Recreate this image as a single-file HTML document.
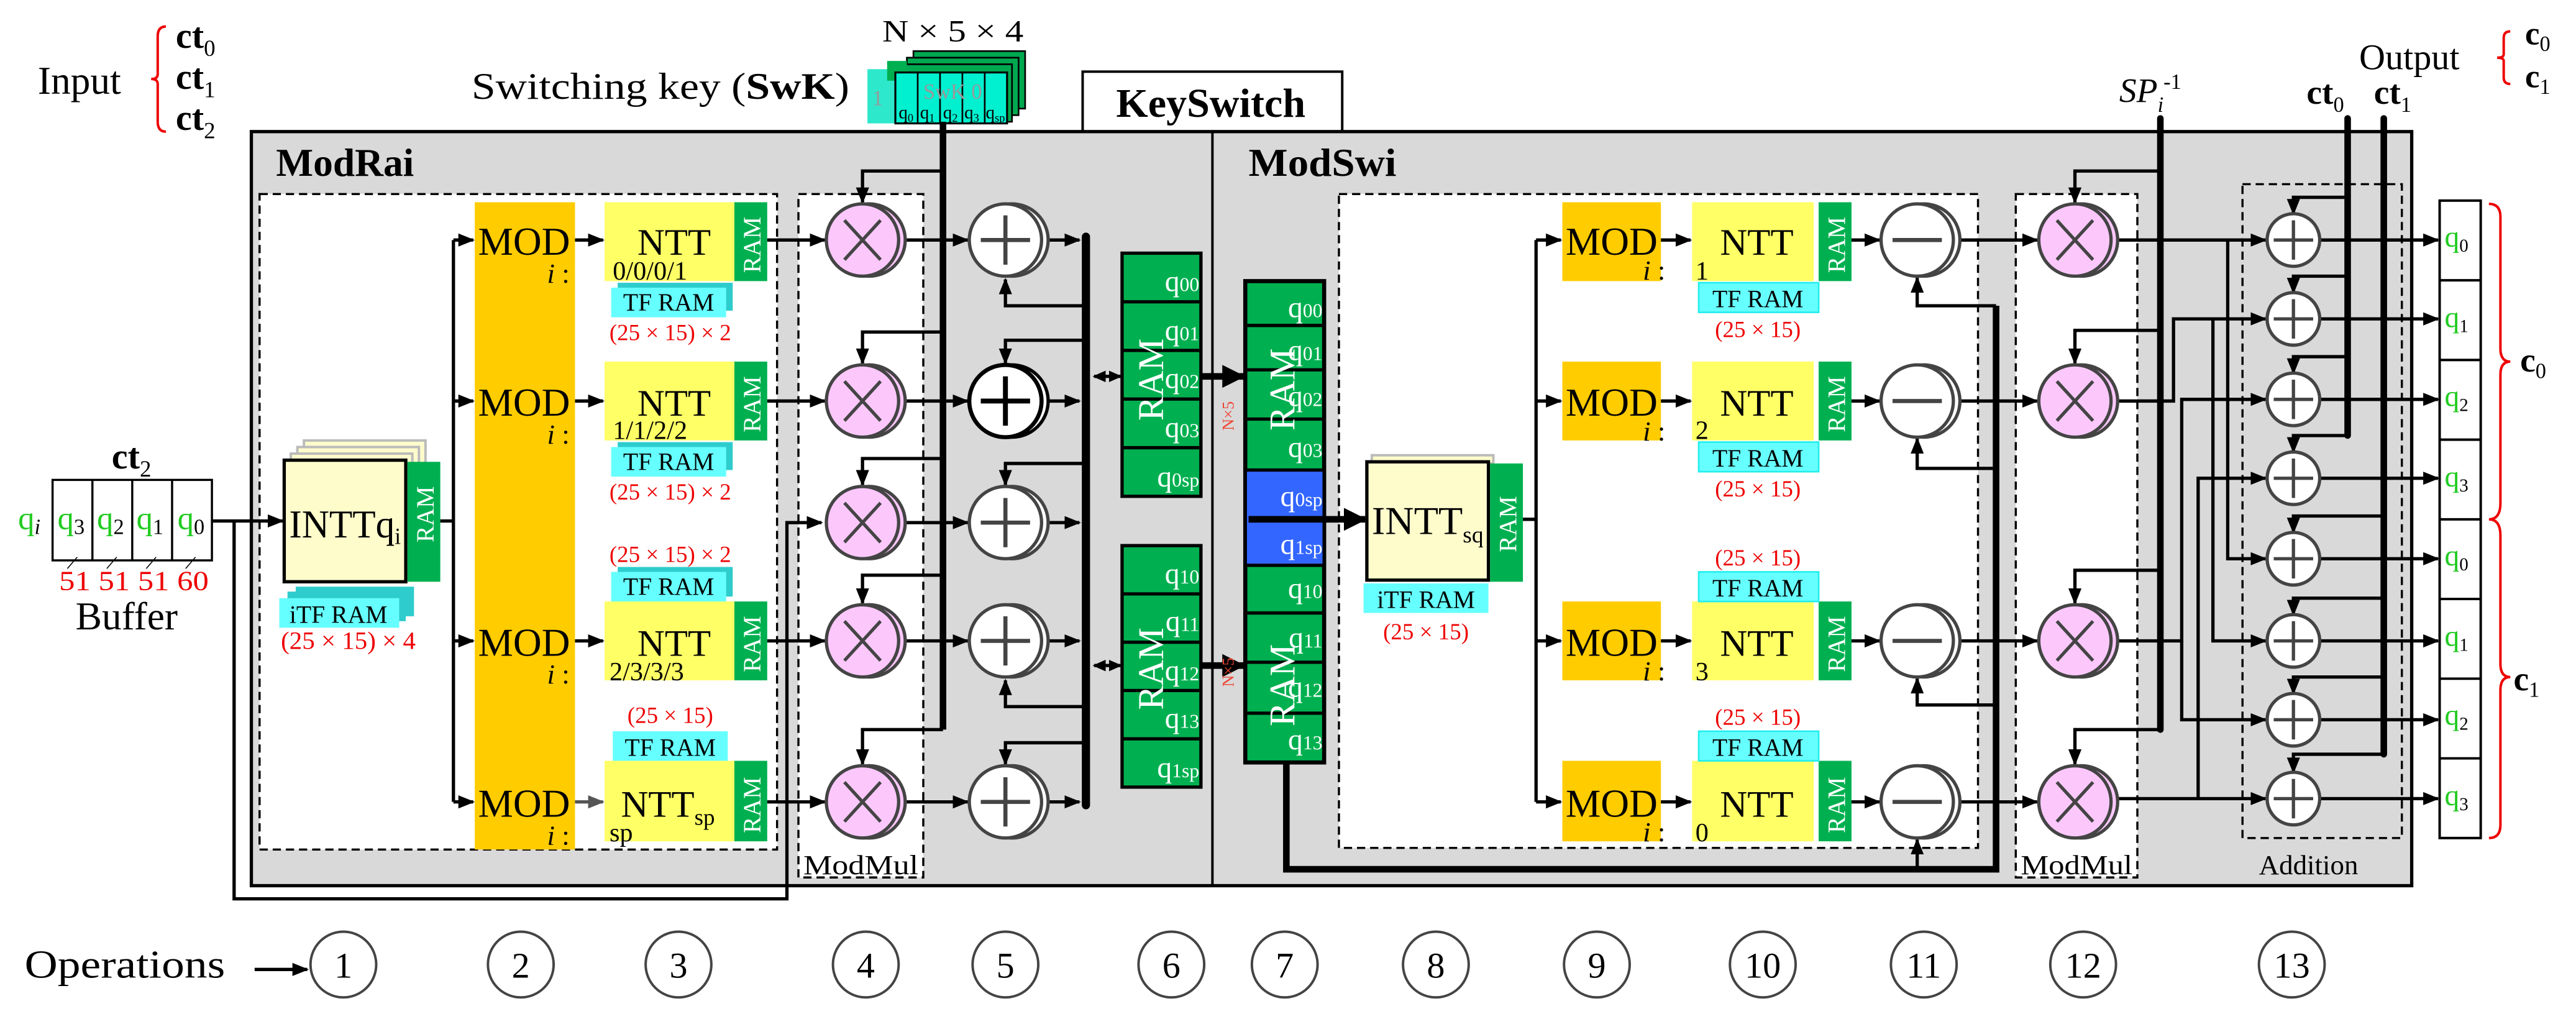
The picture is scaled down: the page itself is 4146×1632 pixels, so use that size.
<!DOCTYPE html>
<html><head><meta charset="utf-8"><style>
html,body{margin:0;padding:0;background:#fff;}
svg{display:block;}
svg *{font-family:"Liberation Serif",serif;}
text,tspan{font-family:"Liberation Serif",serif;}
</style></head><body>
<svg width="4146" height="1632" viewBox="0 0 1568 617" xmlns="http://www.w3.org/2000/svg" font-family="'Liberation Serif', serif">
<defs>
<marker id="a" markerWidth="10" markerHeight="10" refX="9" refY="5" orient="auto" markerUnits="userSpaceOnUse"><path d="M0,1 L10,5 L0,9 z" fill="#000"/></marker>
<marker id="ab" markerWidth="14" markerHeight="14" refX="13" refY="7" orient="auto" markerUnits="userSpaceOnUse"><path d="M0,0 L14,7 L0,14 z" fill="#000"/></marker>
<marker id="ag" markerWidth="10" markerHeight="10" refX="9" refY="5" orient="auto" markerUnits="userSpaceOnUse"><path d="M0,1 L10,5 L0,9 z" fill="#555"/></marker>
<marker id="as" markerWidth="8" markerHeight="8" refX="7" refY="4" orient="auto" markerUnits="userSpaceOnUse"><path d="M0,0.5 L8,4 L0,7.5 z" fill="#000"/></marker>
<marker id="asr" markerWidth="8" markerHeight="8" refX="1" refY="4" orient="auto" markerUnits="userSpaceOnUse"><path d="M8,0.5 L0,4 L8,7.5 z" fill="#000"/></marker>
<g id="mul"><circle cx="4" cy="0" r="22" fill="#fcc8fc" stroke="#444" stroke-width="2"/><circle cx="0" cy="0" r="22" fill="#fcc8fc" stroke="#444" stroke-width="2"/><path d="M-11,-12 L11,12 M11,-12 L-11,12" stroke="#444" stroke-width="2"/></g>
<g id="pls"><circle cx="4" cy="0" r="22" fill="#fff" stroke="#444" stroke-width="2"/><circle cx="0" cy="0" r="22" fill="#fff" stroke="#444" stroke-width="2"/><path d="M-15,0 L15,0 M0,-15 L0,15" stroke="#444" stroke-width="2.5"/></g>
<g id="mns"><circle cx="4" cy="0" r="22" fill="#fff" stroke="#444" stroke-width="2"/><circle cx="0" cy="0" r="22" fill="#fff" stroke="#444" stroke-width="2"/><path d="M-15,0 L15,0" stroke="#444" stroke-width="2.5"/></g>
<g id="sp"><circle cx="0" cy="0" r="16" fill="#fff" stroke="#444" stroke-width="2"/><path d="M-12,0 L12,0 M0,-12 L0,12" stroke="#444" stroke-width="2"/></g>
</defs>

<!-- header -->
<text x="23" y="57" font-size="24">Input</text>
<path d="M101,16 Q96,16 96,22 L96,45 Q96,48 92,48 Q96,48 96,51 L96,74 Q96,80 101,80" fill="none" stroke="#e00" stroke-width="1.5"/>
<text x="107" y="29" font-size="22" font-weight="bold">ct<tspan font-size="14" font-weight="normal" dy="5">0</tspan></text>
<text x="107" y="54" font-size="22" font-weight="bold">ct<tspan font-size="14" font-weight="normal" dy="5">1</tspan></text>
<text x="107" y="79" font-size="22" font-weight="bold">ct<tspan font-size="14" font-weight="normal" dy="5">2</tspan></text>
<text x="287" y="60" font-size="23" textLength="230" lengthAdjust="spacingAndGlyphs">Switching key (<tspan font-weight="bold">SwK</tspan>)</text>
<text x="537" y="25" font-size="19" textLength="86" lengthAdjust="spacingAndGlyphs">N × 5 × 4</text>
<!-- key stack -->
<rect x="528" y="42" width="24" height="33" fill="#2ee8cc"/>
<rect x="556" y="31" width="68" height="35" fill="#00a850" stroke="#000" stroke-width="1"/>
<rect x="552" y="35" width="68" height="35" fill="#00a850" stroke="#000" stroke-width="1"/>
<rect x="548" y="39" width="68" height="35" fill="#00a850" stroke="#000" stroke-width="1"/>
<rect x="540" y="37" width="12" height="12" fill="#00b050"/>
<rect x="545" y="44" width="68" height="31" fill="#00f0d0" stroke="#000" stroke-width="1.2"/>
<path d="M558.6,44 V75 M572.2,44 V75 M585.8,44 V75 M599.4,44 V75" stroke="#000" stroke-width="1"/>
<text x="531" y="64" font-size="13" fill="#999">1</text>
<text x="562" y="60" font-size="13" fill="#999">SwK 0</text>
<g font-size="11"><text x="547" y="72">q<tspan font-size="7" dy="2">0</tspan></text><text x="560" y="72">q<tspan font-size="7" dy="2">1</tspan></text><text x="574" y="72">q<tspan font-size="7" dy="2">2</tspan></text><text x="587" y="72">q<tspan font-size="7" dy="2">3</tspan></text><text x="600" y="72">q<tspan font-size="7" dy="2">sp</tspan></text></g>
<rect x="659" y="43.5" width="158" height="37" fill="#fff" stroke="#000" stroke-width="1.5"/>
<text x="737" y="71" font-size="25" font-weight="bold" text-anchor="middle">KeySwitch</text>
<text x="1290" y="62" font-size="21" font-style="italic">SP<tspan font-size="13" dy="6">i</tspan><tspan font-size="13" font-style="normal" dy="-14">-1</tspan></text>
<text x="1404" y="63" font-size="21" font-weight="bold">ct<tspan font-size="13" font-weight="normal" dy="5">0</tspan></text>
<text x="1445" y="63" font-size="21" font-weight="bold">ct<tspan font-size="13" font-weight="normal" dy="5">1</tspan></text>
<text x="1436" y="42" font-size="22">Output</text>
<path d="M1528,19 Q1524,19 1524,23 L1524,33 Q1524,35 1520,35 Q1524,35 1524,37 L1524,47 Q1524,51 1528,51" fill="none" stroke="#e00" stroke-width="1.5"/>
<text x="1537" y="27" font-size="20" font-weight="bold">c<tspan font-size="13" font-weight="normal" dy="4">0</tspan></text>
<text x="1537" y="53" font-size="20" font-weight="bold">c<tspan font-size="13" font-weight="normal" dy="4">1</tspan></text>

<!-- main gray box -->
<rect x="153" y="80" width="1315" height="459" fill="#d9d9d9" stroke="#000" stroke-width="2"/>
<line x1="738" y1="80" x2="738" y2="539" stroke="#000" stroke-width="1.5"/>
<text x="168" y="107" font-size="24" font-weight="bold" textLength="84" lengthAdjust="spacingAndGlyphs">ModRai</text>
<text x="760" y="107" font-size="24" font-weight="bold" textLength="90" lengthAdjust="spacingAndGlyphs">ModSwi</text>

<!-- dashed boxes -->
<rect x="158" y="118" width="315" height="399" fill="#fff" stroke="#000" stroke-width="1.3" stroke-dasharray="5,3"/>
<rect x="486" y="118" width="76" height="416" fill="#fff" stroke="#000" stroke-width="1.3" stroke-dasharray="5,3"/>
<text x="489" y="532" font-size="17" textLength="70" lengthAdjust="spacingAndGlyphs">ModMul</text>
<rect x="815" y="118" width="389" height="398" fill="#fff" stroke="#000" stroke-width="1.3" stroke-dasharray="5,3"/>
<rect x="1227" y="118" width="74" height="416" fill="#fff" stroke="#000" stroke-width="1.3" stroke-dasharray="5,3"/>
<text x="1230" y="532" font-size="17" textLength="68" lengthAdjust="spacingAndGlyphs">ModMul</text>
<rect x="1365" y="112" width="97" height="398" fill="none" stroke="#000" stroke-width="1.3" stroke-dasharray="5,3"/>
<text x="1375" y="532" font-size="17">Addition</text>

<!-- buffer -->
<text x="68" y="285" font-size="22" font-weight="bold">ct<tspan font-size="14" font-weight="normal" dy="5">2</tspan></text>
<rect x="32" y="292" width="97" height="49" fill="#fff" stroke="#000" stroke-width="1.3"/>
<path d="M56.25,292 V341 M80.5,292 V341 M104.75,292 V341" stroke="#000" stroke-width="1.3"/>
<text x="11" y="322" font-size="20" fill="#2c2">q<tspan font-size="13" font-style="italic" fill="#000" dy="3">i</tspan></text>
<g font-size="20" fill="#2c2"><text x="35" y="322">q<tspan font-size="13" fill="#000" dy="3">3</tspan></text><text x="59" y="322">q<tspan font-size="13" fill="#000" dy="3">2</tspan></text><text x="83" y="322">q<tspan font-size="13" fill="#000" dy="3">1</tspan></text><text x="108" y="322">q<tspan font-size="13" fill="#000" dy="3">0</tspan></text></g>
<g stroke="#000" stroke-width="0.6"><path d="M41,346 L47,339 M65,346 L71,339 M89,346 L95,339 M113,346 L119,339"/></g>
<text x="36" y="359" font-size="17" fill="#e00" textLength="91" lengthAdjust="spacingAndGlyphs">51 51 51 60</text>
<text x="46" y="383" font-size="24">Buffer</text>

<!-- ModRai INTT -->
<rect x="185" y="268" width="74" height="73" fill="#fffccc" stroke="#bbb" stroke-width="1.5"/>
<rect x="181" y="272" width="74" height="73" fill="#fffccc" stroke="#bbb" stroke-width="1.5"/>
<rect x="177" y="276" width="74" height="73" fill="#fffccc" stroke="#bbb" stroke-width="1.5"/>
<rect x="173" y="280" width="74" height="74" fill="#fffccc" stroke="#000" stroke-width="2"/>
<rect x="248" y="281" width="20" height="73" fill="#00b050"/>
<text x="176" y="327" font-size="24" textLength="68" lengthAdjust="spacingAndGlyphs">INTTq<tspan font-size="14" dy="4">i</tspan></text>
<text transform="translate(264,330) rotate(-90)" font-size="15" fill="#fff">RAM</text>
<rect x="180" y="357" width="72" height="18" fill="#2ecccc"/>
<rect x="175" y="360" width="72" height="18" fill="#2ecccc"/>
<rect x="170" y="364" width="73" height="18" fill="#66ffff"/>
<text x="206" y="379" font-size="15" text-anchor="middle">iTF RAM</text>
<text x="171" y="395" font-size="15" fill="#e00" textLength="82" lengthAdjust="spacingAndGlyphs">(25 × 15) × 4</text>

<!-- MOD column -->
<rect x="289" y="123" width="61" height="394" fill="#ffcc00"/>
<g font-size="24"><text x="291" y="155">MOD</text><text x="291" y="253">MOD</text><text x="291" y="399">MOD</text><text x="291" y="497">MOD</text></g>
<g font-size="17"><text x="333" y="172"><tspan font-style="italic">i</tspan> :</text><text x="333" y="270"><tspan font-style="italic">i</tspan> :</text><text x="333" y="416"><tspan font-style="italic">i</tspan> :</text><text x="333" y="514"><tspan font-style="italic">i</tspan> :</text></g>

<!-- NTT ModRai -->
<g fill="#ffff66"><rect x="368" y="123" width="79" height="48"/><rect x="368" y="220" width="79" height="48"/><rect x="368" y="366" width="79" height="48"/><rect x="368" y="463" width="79" height="49"/></g>
<g fill="#00b050"><rect x="447" y="123" width="20" height="48"/><rect x="447" y="220" width="20" height="48"/><rect x="447" y="366" width="20" height="48"/><rect x="447" y="463" width="20" height="49"/></g>
<g font-size="15" fill="#fff"><text transform="translate(463,166) rotate(-90)">RAM</text><text transform="translate(463,263) rotate(-90)">RAM</text><text transform="translate(463,409) rotate(-90)">RAM</text><text transform="translate(463,507) rotate(-90)">RAM</text></g>
<g font-size="23"><text x="388" y="155">NTT</text><text x="388" y="253">NTT</text><text x="388" y="399">NTT</text><text x="378" y="497">NTT<tspan font-size="14" dy="5">sp</tspan></text></g>
<g font-size="16"><text x="373" y="170">0/0/0/1</text><text x="373" y="267">1/1/2/2</text><text x="371" y="414">2/3/3/3</text><text x="371" y="512">sp</text></g>
<rect x="376" y="172" width="70" height="17" fill="#2ecccc"/><rect x="372" y="175" width="70" height="18" fill="#66ffff"/>
<rect x="376" y="269" width="70" height="17" fill="#2ecccc"/><rect x="372" y="272" width="70" height="18" fill="#66ffff"/>
<rect x="376" y="345" width="70" height="18" fill="#2ecccc"/><rect x="372" y="348" width="70" height="18" fill="#66ffff"/>
<rect x="373" y="445" width="70" height="18" fill="#66ffff"/>
<g font-size="15" text-anchor="middle"><text x="407" y="189">TF RAM</text><text x="407" y="286">TF RAM</text><text x="407" y="362">TF RAM</text><text x="408" y="460">TF RAM</text></g>
<g font-size="14" fill="#e00" text-anchor="middle"><text x="408" y="207">(25 × 15) × 2</text><text x="408" y="304">(25 × 15) × 2</text><text x="408" y="342">(25 × 15) × 2</text><text x="408" y="440">(25 × 15)</text></g>

<!-- ModRai wiring -->
<g stroke="#000" stroke-width="2" fill="none">
<line x1="129" y1="317" x2="172" y2="317" marker-end="url(#a)"/>
<polyline points="142.5,317 142.5,547 479,547 479,318 500,318" marker-end="url(#a)"/>
<line x1="268" y1="317" x2="276" y2="317"/>
<line x1="276" y1="146" x2="276" y2="488"/>
<line x1="276" y1="146" x2="288" y2="146" marker-end="url(#a)"/>
<line x1="276" y1="244" x2="288" y2="244" marker-end="url(#a)"/>
<line x1="276" y1="390" x2="288" y2="390" marker-end="url(#a)"/>
<line x1="276" y1="488" x2="288" y2="488" marker-end="url(#a)"/>
<line x1="350" y1="146" x2="367" y2="146" marker-end="url(#a)"/>
<line x1="350" y1="244" x2="367" y2="244" marker-end="url(#a)"/>
<line x1="350" y1="390" x2="367" y2="390" marker-end="url(#a)"/>
<line x1="350" y1="488" x2="367" y2="488" stroke="#555" marker-end="url(#ag)"/>
<line x1="467" y1="146" x2="502" y2="146" marker-end="url(#a)"/>
<line x1="467" y1="244" x2="502" y2="244" marker-end="url(#a)"/>
<line x1="467" y1="390" x2="502" y2="390" marker-end="url(#a)"/>
<line x1="467" y1="488" x2="502" y2="488" marker-end="url(#a)"/>
<line x1="551" y1="146" x2="589" y2="146" marker-end="url(#a)"/>
<line x1="551" y1="244" x2="589" y2="244" marker-end="url(#a)"/>
<line x1="551" y1="318" x2="589" y2="318" marker-end="url(#a)"/>
<line x1="551" y1="390" x2="589" y2="390" marker-end="url(#a)"/>
<line x1="551" y1="488" x2="589" y2="488" marker-end="url(#a)"/>
<line x1="638" y1="146" x2="657" y2="146" marker-end="url(#a)"/>
<line x1="638" y1="244" x2="657" y2="244" marker-end="url(#a)"/>
<line x1="638" y1="318" x2="657" y2="318" marker-end="url(#a)"/>
<line x1="638" y1="390" x2="657" y2="390" marker-end="url(#a)"/>
<line x1="638" y1="488" x2="657" y2="488" marker-end="url(#a)"/>
<polyline points="661,186 612,186 612,170" marker-end="url(#a)"/>
<polyline points="661,207 612,207 612,221" marker-end="url(#a)"/>
<polyline points="661,282 612,282 612,295" marker-end="url(#a)"/>
<polyline points="661,430 612,430 612,414" marker-end="url(#a)"/>
<polyline points="661,452 612,452 612,465" marker-end="url(#a)"/>
<polyline points="574,104 525,104 525,123" marker-end="url(#a)"/>
<polyline points="574,202 525,202 525,221" marker-end="url(#a)"/>
<polyline points="574,279 525,279 525,295" marker-end="url(#a)"/>
<polyline points="574,350 525,350 525,367" marker-end="url(#a)"/>
<polyline points="574,444 525,444 525,465" marker-end="url(#a)"/>
<line x1="666" y1="229" x2="682" y2="229" marker-start="url(#asr)" marker-end="url(#as)"/>
<line x1="666" y1="405" x2="682" y2="405" marker-start="url(#asr)" marker-end="url(#as)"/>
</g>
<line x1="574" y1="74" x2="574" y2="444" stroke="#000" stroke-width="4"/>
<line x1="661" y1="144" x2="661" y2="490" stroke="#000" stroke-width="5" stroke-linecap="round"/>
<use href="#mul" x="525" y="146"/><use href="#mul" x="525" y="244"/><use href="#mul" x="525" y="318"/><use href="#mul" x="525" y="390"/><use href="#mul" x="525" y="488"/>
<use href="#pls" x="612" y="146"/><use href="#pls" x="612" y="318"/><use href="#pls" x="612" y="390"/><use href="#pls" x="612" y="488"/>
<g><circle cx="616" cy="244" r="22" fill="#fff" stroke="#000" stroke-width="2"/><circle cx="612" cy="244" r="22" fill="#fff" stroke="#000" stroke-width="2.5"/><path d="M597,244 L627,244 M612,229 L612,259" stroke="#000" stroke-width="3"/></g>

<!-- col6 -->
<g stroke="#000" stroke-width="2" fill="#00b050">
<rect x="683" y="154" width="48" height="148"/><rect x="683" y="332" width="48" height="147"/>
</g>
<path d="M683,183.6 H731 M683,213.2 H731 M683,242.8 H731 M683,272.4 H731 M683,361.4 H731 M683,390.8 H731 M683,420.2 H731 M683,449.6 H731" stroke="#000" stroke-width="2"/>
<g font-size="18" fill="#fff" text-anchor="end">
<text x="730" y="177">q<tspan font-size="12">00</tspan></text><text x="730" y="207">q<tspan font-size="12">01</tspan></text><text x="730" y="236">q<tspan font-size="12">02</tspan></text><text x="730" y="266">q<tspan font-size="12">03</tspan></text><text x="730" y="296">q<tspan font-size="12">0sp</tspan></text>
<text x="730" y="355">q<tspan font-size="12">10</tspan></text><text x="730" y="384">q<tspan font-size="12">11</tspan></text><text x="730" y="414">q<tspan font-size="12">12</tspan></text><text x="730" y="443">q<tspan font-size="12">13</tspan></text><text x="730" y="473">q<tspan font-size="12">1sp</tspan></text>
</g>
<g font-size="22" fill="#fff"><text transform="translate(708,256) rotate(-90)">RAM</text><text transform="translate(708,432) rotate(-90)">RAM</text></g>
<g stroke="#000" stroke-width="4"><line x1="731" y1="229" x2="757" y2="229" marker-end="url(#ab)"/><line x1="731" y1="405" x2="757" y2="405" marker-end="url(#ab)"/></g>
<g font-size="10" fill="#e43"><text transform="translate(751,262) rotate(-90)">N×5</text><text transform="translate(751,418) rotate(-90)">N×5</text></g>

<!-- col7 -->
<rect x="758" y="171" width="48" height="293" fill="#00b050" stroke="#000" stroke-width="2.5"/>
<rect x="759" y="286" width="46" height="58" fill="#3366ff"/>
<path d="M758,198 H806 M758,225 H806 M758,255 H806 M758,286 H806 M758,344 H806 M758,373 H806 M758,403 H806 M758,434 H806" stroke="#000" stroke-width="2"/>
<g font-size="18" fill="#fff" text-anchor="end">
<text x="805" y="193">q<tspan font-size="12">00</tspan></text><text x="805" y="219">q<tspan font-size="12">01</tspan></text><text x="805" y="247">q<tspan font-size="12">02</tspan></text><text x="805" y="278">q<tspan font-size="12">03</tspan></text><text x="805" y="308">q<tspan font-size="12">0sp</tspan></text><text x="805" y="337">q<tspan font-size="12">1sp</tspan></text><text x="805" y="364">q<tspan font-size="12">10</tspan></text><text x="805" y="394">q<tspan font-size="12">11</tspan></text><text x="805" y="424">q<tspan font-size="12">12</tspan></text><text x="805" y="456">q<tspan font-size="12">13</tspan></text>
</g>
<g font-size="22" fill="#fff"><text transform="translate(788,262) rotate(-90)">RAM</text><text transform="translate(788,442) rotate(-90)">RAM</text></g>
<line x1="760" y1="316" x2="831" y2="316" stroke="#000" stroke-width="4" marker-end="url(#ab)"/>
<polyline points="783,464 783,529 1215,529 1215,186" fill="none" stroke="#000" stroke-width="4"/>

<!-- INTTsq -->
<rect x="835" y="277" width="74" height="5" fill="#fffccc" stroke="#bbb" stroke-width="1.5"/>
<rect x="832" y="281" width="74" height="72" fill="#fffccc" stroke="#000" stroke-width="2"/>
<rect x="907" y="282" width="20" height="72" fill="#00b050"/>
<text x="835" y="325" font-size="24" textLength="68" lengthAdjust="spacingAndGlyphs">INTT<tspan font-size="14" dy="5">sq</tspan></text>
<text transform="translate(923,336) rotate(-90)" font-size="15" fill="#fff">RAM</text>
<rect x="830" y="355" width="76" height="18" fill="#66ffff"/>
<text x="868" y="370" font-size="15" text-anchor="middle">iTF RAM</text>
<text x="868" y="389" font-size="14" fill="#e00" text-anchor="middle">(25 × 15)</text>

<!-- ModSwi MOD/NTT -->
<g fill="#ffcc00"><rect x="951" y="123" width="60" height="48"/><rect x="951" y="220" width="60" height="48"/><rect x="951" y="366" width="60" height="48"/><rect x="951" y="463" width="60" height="49"/></g>
<g font-size="24"><text x="953" y="155">MOD</text><text x="953" y="253">MOD</text><text x="953" y="399">MOD</text><text x="953" y="497">MOD</text></g>
<g font-size="17"><text x="1000" y="170"><tspan font-style="italic">i</tspan> :</text><text x="1000" y="268"><tspan font-style="italic">i</tspan> :</text><text x="1000" y="414"><tspan font-style="italic">i</tspan> :</text><text x="1000" y="512"><tspan font-style="italic">i</tspan> :</text></g>
<g fill="#ffff66"><rect x="1030" y="123" width="74" height="48"/><rect x="1030" y="220" width="74" height="48"/><rect x="1030" y="366" width="74" height="48"/><rect x="1030" y="463" width="74" height="49"/></g>
<g fill="#00b050"><rect x="1107" y="123" width="20" height="48"/><rect x="1107" y="220" width="20" height="48"/><rect x="1107" y="366" width="20" height="48"/><rect x="1107" y="463" width="20" height="49"/></g>
<g font-size="15" fill="#fff"><text transform="translate(1123,166) rotate(-90)">RAM</text><text transform="translate(1123,263) rotate(-90)">RAM</text><text transform="translate(1123,409) rotate(-90)">RAM</text><text transform="translate(1123,507) rotate(-90)">RAM</text></g>
<g font-size="23"><text x="1047" y="155">NTT</text><text x="1047" y="253">NTT</text><text x="1047" y="399">NTT</text><text x="1047" y="497">NTT</text></g>
<g font-size="16"><text x="1032" y="170">1</text><text x="1032" y="267">2</text><text x="1032" y="414">3</text><text x="1032" y="512">0</text></g>
<g fill="#66ffff" stroke="#2ee" stroke-width="1"><rect x="1034" y="172" width="73" height="18"/><rect x="1034" y="269" width="73" height="18"/><rect x="1034" y="348" width="73" height="18"/><rect x="1034" y="445" width="73" height="18"/></g>
<g font-size="15" text-anchor="middle"><text x="1070" y="187">TF RAM</text><text x="1070" y="284">TF RAM</text><text x="1070" y="363">TF RAM</text><text x="1070" y="460">TF RAM</text></g>
<g font-size="14" fill="#e00" text-anchor="middle"><text x="1070" y="205">(25 × 15)</text><text x="1070" y="302">(25 × 15)</text><text x="1070" y="344">(25 × 15)</text><text x="1070" y="441">(25 × 15)</text></g>

<!-- ModSwi wiring -->
<g stroke="#000" stroke-width="2" fill="none">
<line x1="927" y1="316" x2="935" y2="316"/>
<line x1="935" y1="146" x2="935" y2="488"/>
<line x1="935" y1="146" x2="950" y2="146" marker-end="url(#a)"/>
<line x1="935" y1="244" x2="950" y2="244" marker-end="url(#a)"/>
<line x1="935" y1="390" x2="950" y2="390" marker-end="url(#a)"/>
<line x1="935" y1="488" x2="950" y2="488" marker-end="url(#a)"/>
<line x1="1011" y1="146" x2="1029" y2="146" marker-end="url(#a)"/>
<line x1="1011" y1="244" x2="1029" y2="244" marker-end="url(#a)"/>
<line x1="1011" y1="390" x2="1029" y2="390" marker-end="url(#a)"/>
<line x1="1011" y1="488" x2="1029" y2="488" marker-end="url(#a)"/>
<line x1="1127" y1="146" x2="1144" y2="146" marker-end="url(#a)"/>
<line x1="1127" y1="244" x2="1144" y2="244" marker-end="url(#a)"/>
<line x1="1127" y1="390" x2="1144" y2="390" marker-end="url(#a)"/>
<line x1="1127" y1="488" x2="1144" y2="488" marker-end="url(#a)"/>
<line x1="1193" y1="146" x2="1240" y2="146" marker-end="url(#a)"/>
<line x1="1193" y1="244" x2="1240" y2="244" marker-end="url(#a)"/>
<line x1="1193" y1="390" x2="1240" y2="390" marker-end="url(#a)"/>
<line x1="1193" y1="488" x2="1240" y2="488" marker-end="url(#a)"/>
<polyline points="1215,186 1167,186 1167,169" marker-end="url(#a)"/>
<polyline points="1215,285 1167,285 1167,267" marker-end="url(#a)"/>
<polyline points="1215,429 1167,429 1167,413" marker-end="url(#a)"/>
<line x1="1167" y1="529" x2="1167" y2="511" marker-end="url(#a)"/>
<polyline points="1315,104 1263,104 1263,123" marker-end="url(#a)"/>
<polyline points="1315,201 1263,201 1263,221" marker-end="url(#a)"/>
<polyline points="1315,347 1263,347 1263,367" marker-end="url(#a)"/>
<polyline points="1315,444 1263,444 1263,465" marker-end="url(#a)"/>
<line x1="1289" y1="146" x2="1379" y2="146" marker-end="url(#a)"/>
<polyline points="1356,146 1356,340 1379,340" marker-end="url(#a)"/>
<polyline points="1289,244 1323,244 1323,194 1379,194" marker-end="url(#a)"/>
<polyline points="1347,194 1347,390 1379,390" marker-end="url(#a)"/>
<polyline points="1289,390 1328,390 1328,243 1379,243" marker-end="url(#a)"/>
<polyline points="1328,390 1328,438 1379,438" marker-end="url(#a)"/>
<line x1="1289" y1="486" x2="1379" y2="486" marker-end="url(#a)"/>
<polyline points="1338,486 1338,291 1379,291" marker-end="url(#a)"/>
<polyline points="1429,120 1396,120 1396,130" marker-end="url(#a)"/>
<polyline points="1429,168 1396,168 1396,178" marker-end="url(#a)"/>
<polyline points="1429,217 1396,217 1396,227" marker-end="url(#a)"/>
<polyline points="1429,265 1396,265 1396,275" marker-end="url(#a)"/>
<polyline points="1451,314 1396,314 1396,324" marker-end="url(#a)"/>
<polyline points="1451,364 1396,364 1396,374" marker-end="url(#a)"/>
<polyline points="1451,412 1396,412 1396,422" marker-end="url(#a)"/>
<polyline points="1451,459 1396,459 1396,470" marker-end="url(#a)"/>
<line x1="1412" y1="146" x2="1484" y2="146" marker-end="url(#a)"/>
<line x1="1412" y1="194" x2="1484" y2="194" marker-end="url(#a)"/>
<line x1="1412" y1="243" x2="1484" y2="243" marker-end="url(#a)"/>
<line x1="1412" y1="291" x2="1484" y2="291" marker-end="url(#a)"/>
<line x1="1412" y1="340" x2="1484" y2="340" marker-end="url(#a)"/>
<line x1="1412" y1="390" x2="1484" y2="390" marker-end="url(#a)"/>
<line x1="1412" y1="438" x2="1484" y2="438" marker-end="url(#a)"/>
<line x1="1412" y1="486" x2="1484" y2="486" marker-end="url(#a)"/>
</g>
<g stroke="#000" stroke-width="4" stroke-linecap="round">
<line x1="1315" y1="72" x2="1315" y2="444"/>
<line x1="1429" y1="72" x2="1429" y2="265"/>
<line x1="1451" y1="72" x2="1451" y2="459"/>
</g>
<use href="#mns" x="1167" y="146"/><use href="#mns" x="1167" y="244"/><use href="#mns" x="1167" y="390"/><use href="#mns" x="1167" y="488"/>
<use href="#mul" x="1263" y="146"/><use href="#mul" x="1263" y="244"/><use href="#mul" x="1263" y="390"/><use href="#mul" x="1263" y="488"/>
<use href="#sp" x="1396" y="146"/><use href="#sp" x="1396" y="194"/><use href="#sp" x="1396" y="243"/><use href="#sp" x="1396" y="291"/><use href="#sp" x="1396" y="340"/><use href="#sp" x="1396" y="390"/><use href="#sp" x="1396" y="438"/><use href="#sp" x="1396" y="486"/>

<!-- output column -->
<rect x="1485" y="122" width="25" height="388" fill="#fff" stroke="#000" stroke-width="1.5"/>
<path d="M1485,170.5 H1510 M1485,219 H1510 M1485,267.5 H1510 M1485,316 H1510 M1485,364.5 H1510 M1485,413 H1510 M1485,461.5 H1510" stroke="#000" stroke-width="1.5"/>
<g font-size="18" fill="#2c2">
<text x="1488" y="150">q<tspan font-size="11" fill="#000" dy="3">0</tspan></text><text x="1488" y="199">q<tspan font-size="11" fill="#000" dy="3">1</tspan></text><text x="1488" y="247">q<tspan font-size="11" fill="#000" dy="3">2</tspan></text><text x="1488" y="296">q<tspan font-size="11" fill="#000" dy="3">3</tspan></text>
<text x="1488" y="344">q<tspan font-size="11" fill="#000" dy="3">0</tspan></text><text x="1488" y="393">q<tspan font-size="11" fill="#000" dy="3">1</tspan></text><text x="1488" y="441">q<tspan font-size="11" fill="#000" dy="3">2</tspan></text><text x="1488" y="490">q<tspan font-size="11" fill="#000" dy="3">3</tspan></text>
</g>
<path d="M1515,124 Q1522,124 1522,132 L1522,212 Q1522,220 1528,220 Q1522,220 1522,228 L1522,306 Q1522,316 1515,316 Q1522,316 1522,326 L1522,404 Q1522,412 1528,412 Q1522,412 1522,420 L1522,502 Q1522,510 1515,510" fill="none" stroke="#e00" stroke-width="1.5"/>
<text x="1534" y="226" font-size="21" font-weight="bold">c<tspan font-size="13" font-weight="normal" dy="4">0</tspan></text>
<text x="1530" y="420" font-size="21" font-weight="bold">c<tspan font-size="13" font-weight="normal" dy="4">1</tspan></text>

<!-- operations -->
<text x="15" y="595" font-size="24" textLength="122" lengthAdjust="spacingAndGlyphs">Operations</text>
<line x1="155" y1="590" x2="187" y2="590" stroke="#000" stroke-width="2" marker-end="url(#a)"/>
<g fill="#fff" stroke="#444" stroke-width="1.5">
<circle cx="209" cy="587" r="20"/><circle cx="317" cy="587" r="20"/><circle cx="413" cy="587" r="20"/><circle cx="527" cy="587" r="20"/><circle cx="612" cy="587" r="20"/><circle cx="713" cy="587" r="20"/><circle cx="782" cy="587" r="20"/><circle cx="874" cy="587" r="20"/><circle cx="972" cy="587" r="20"/><circle cx="1073" cy="587" r="20"/><circle cx="1171" cy="587" r="20"/><circle cx="1268" cy="587" r="20"/><circle cx="1395" cy="587" r="20"/>
</g>
<g font-size="22" text-anchor="middle">
<text x="209" y="595">1</text><text x="317" y="595">2</text><text x="413" y="595">3</text><text x="527" y="595">4</text><text x="612" y="595">5</text><text x="713" y="595">6</text><text x="782" y="595">7</text><text x="874" y="595">8</text><text x="972" y="595">9</text><text x="1073" y="595">10</text><text x="1171" y="595">11</text><text x="1268" y="595">12</text><text x="1395" y="595">13</text>
</g>
</svg>
</body></html>
